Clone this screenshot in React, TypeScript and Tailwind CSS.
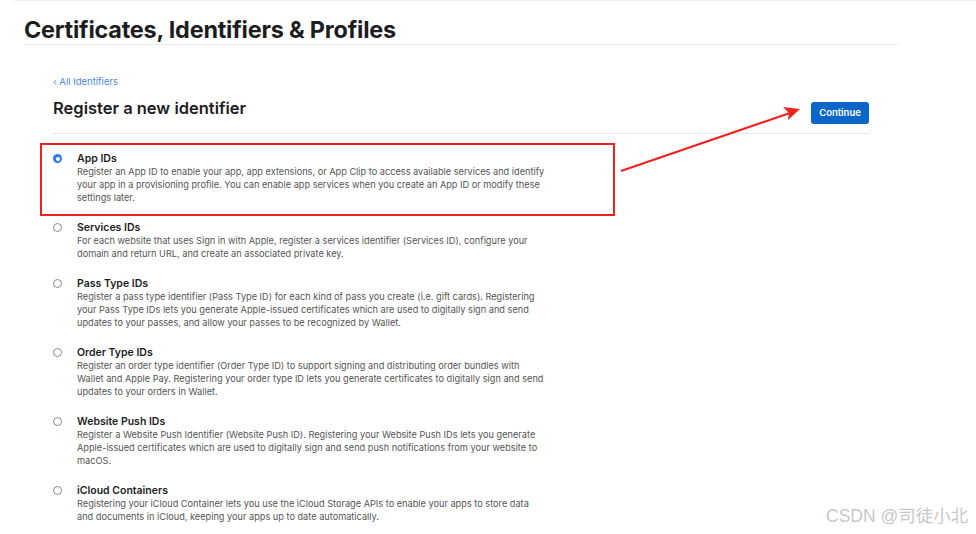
import React from 'react'

const items = [
  {
    title: 'App IDs',
    lines: [
      'Register an App ID to enable your app, app extensions, or App Clip to access available services and identify',
      'your app in a provisioning profile. You can enable app services when you create an App ID or modify these',
      'settings later.',
    ],
    checked: true,
  },
  {
    title: 'Services IDs',
    lines: [
      'For each website that uses Sign in with Apple, register a services identifier (Services ID), configure your',
      'domain and return URL, and create an associated private key.',
    ],
  },
  {
    title: 'Pass Type IDs',
    lines: [
      'Register a pass type identifier (Pass Type ID) for each kind of pass you create (i.e. gift cards). Registering',
      'your Pass Type IDs lets you generate Apple-issued certificates which are used to digitally sign and send',
      'updates to your passes, and allow your passes to be recognized by Wallet.',
    ],
  },
  {
    title: 'Order Type IDs',
    lines: [
      'Register an order type identifier (Order Type ID) to support signing and distributing order bundles with',
      'Wallet and Apple Pay. Registering your order type ID lets you generate certificates to digitally sign and send',
      'updates to your orders in Wallet.',
    ],
  },
  {
    title: 'Website Push IDs',
    lines: [
      'Register a Website Push Identifier (Website Push ID). Registering your Website Push IDs lets you generate',
      'Apple-issued certificates which are used to digitally sign and send push notifications from your website to',
      'macOS.',
    ],
  },
  {
    title: 'iCloud Containers',
    lines: [
      'Registering your iCloud Container lets you use the iCloud Storage APIs to enable your apps to store data',
      'and documents in iCloud, keeping your apps up to date automatically.',
    ],
  },
]

function Radio({ checked }: { checked?: boolean }) {
  if (checked) {
    return (
      <span className="mt-[2px] flex h-[9px] w-[9px] shrink-0 items-center justify-center rounded-full bg-[#2f7bf5]">
        <span className="h-[4px] w-[4px] rounded-full bg-white" />
      </span>
    )
  }
  return <span className="mt-[2px] h-[9px] w-[9px] shrink-0 rounded-full border border-[#8a8a8a] bg-white" />
}

export default function App() {
  return (
    <div className="relative h-[534px] w-[976px] overflow-hidden bg-white font-['Inter',sans-serif] text-[#1d1d1f]">
      <div className="ml-[13px] h-[2px] border-t border-[#f2f2f2]" />
      <div className="ml-[24px] w-[874px] border-b border-[#ececec] pt-[14px] pb-[1px]">
        <h1 className="text-[23.4px] font-bold leading-[27px] tracking-[-0.2px]">Certificates, Identifiers &amp; Profiles</h1>
      </div>

      <div className="ml-[53px] w-[816px]">
        <a href="#" className="mt-[30px] block text-[9.5px] leading-[13px] text-[#4a8ae6]">‹ All Identifiers</a>
        <div className="mt-[9px] flex items-start justify-between border-b border-[#e8e8e8] pb-[9px]">
          <h2 className="text-[16.5px] font-semibold leading-[22px]">Register a new identifier</h2>
          <button className="mt-[5px] h-[22px] w-[58px] rounded-[3px] bg-[#0a66c8] text-[9.5px] font-semibold text-white">Continue</button>
        </div>

        <div className="mt-[18px] flex flex-col gap-[17px]">
          {items.map((it) => (
            <div key={it.title} className="flex gap-[15px]">
              <Radio checked={it.checked} />
              <div className="whitespace-nowrap">
                <div className="text-[10.5px] font-semibold leading-[13px]">{it.title}</div>
                {it.lines.map((l) => (
                  <p key={l} className="text-[9.2px] leading-[13px] text-[#555]">{l}</p>
                ))}
              </div>
            </div>
          ))}
        </div>
      </div>

      <div className="absolute left-[40px] top-[143px] h-[73px] w-[575px] border-2 border-[#f0201b]" />

      <svg className="absolute left-0 top-0" width="976" height="534" viewBox="0 0 976 534">
        <path d="M621 171 L790 113" stroke="#f0201b" strokeWidth="2" fill="none" />
        <path d="M800 109 L783 107 L789 113 L788 120 Z" fill="#f0201b" />
      </svg>

      <div className="absolute left-[826px] top-[506px] text-[17.5px] leading-[20px] text-[#c8c8c8] font-['Liberation_Sans','Noto_Sans_CJK_SC',sans-serif]">
        CSDN @司徒小北
      </div>
    </div>
  )
}
